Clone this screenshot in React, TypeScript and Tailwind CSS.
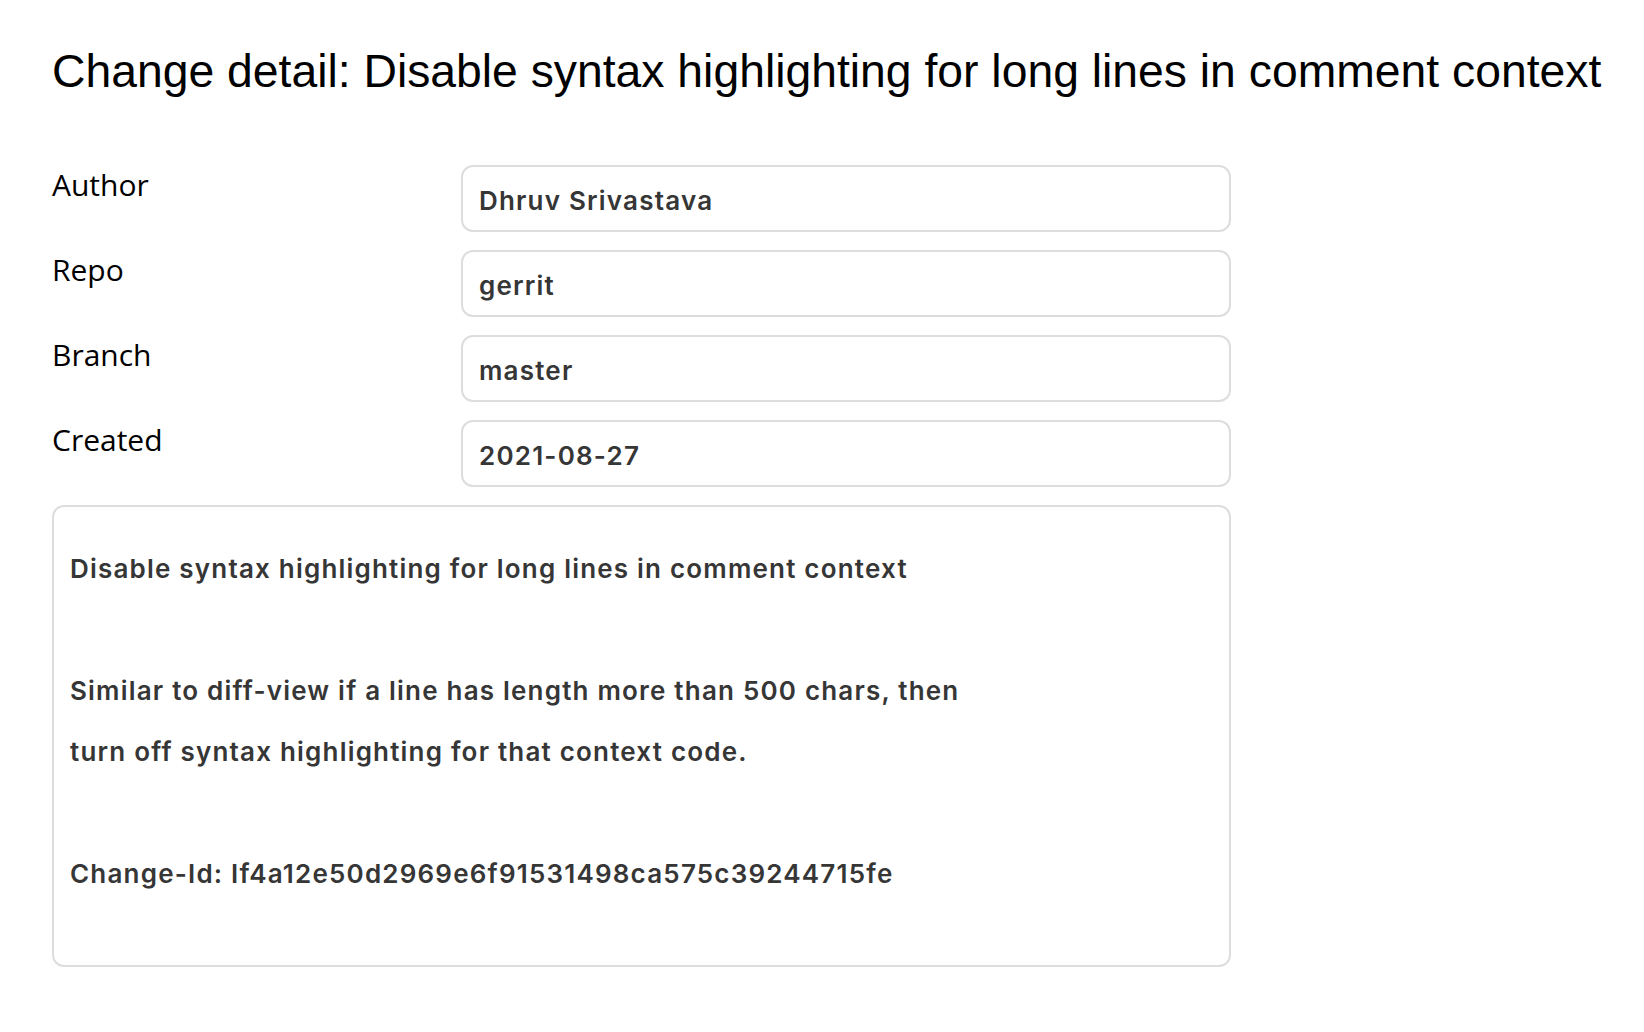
const fields = [
  { label: 'Author', value: 'Dhruv Srivastava' },
  { label: 'Repo', value: 'gerrit' },
  { label: 'Branch', value: 'master' },
  { label: 'Created', value: '2021-08-27' },
];

const message = [
  'Disable syntax highlighting for long lines in comment context',
  '',
  'Similar to diff-view if a line has length more than 500 chars, then',
  'turn off syntax highlighting for that context code.',
  '',
  'Change-Id: If4a12e50d2969e6f91531498ca575c39244715fe',
  '',
];

export default function App() {
  return (
    <div className="min-h-screen bg-white px-[52px] pt-[44px] font-['Open_Sans',sans-serif]">
      {/* Title */}
      <h1 className="whitespace-nowrap font-['Liberation_Sans',Arial,sans-serif] text-[46.3px] leading-[54px] text-black">
        Change detail: Disable syntax highlighting for long lines in comment context
      </h1>

      <div className="mt-[67px] flex w-[1179px] flex-col gap-[18px]">
        {fields.map((f) => (
          <div key={f.label} className="flex">
            <div className="w-[409px] shrink-0 text-[30px] leading-[40px] text-black">{f.label}</div>
            <div className="flex h-[67px] flex-1 items-center rounded-[12px] border-2 border-[#dddddd] px-[16px] pt-[3px] font-['Inter',sans-serif] text-[26px] font-semibold tracking-[1.2px] text-[#363636]">
              {f.value}
            </div>
          </div>
        ))}

        {/* Commit message */}
        <div className="rounded-[12px] border-2 border-[#dddddd] px-[16px] pt-[31px] font-['Inter',sans-serif] text-[26px] font-semibold leading-[61px] tracking-[1.2px] text-[#363636]">
          {message.map((line, i) => (
            <div key={i} className="h-[61px] whitespace-pre">
              {line}
            </div>
          ))}
        </div>
      </div>
    </div>
  );
}
